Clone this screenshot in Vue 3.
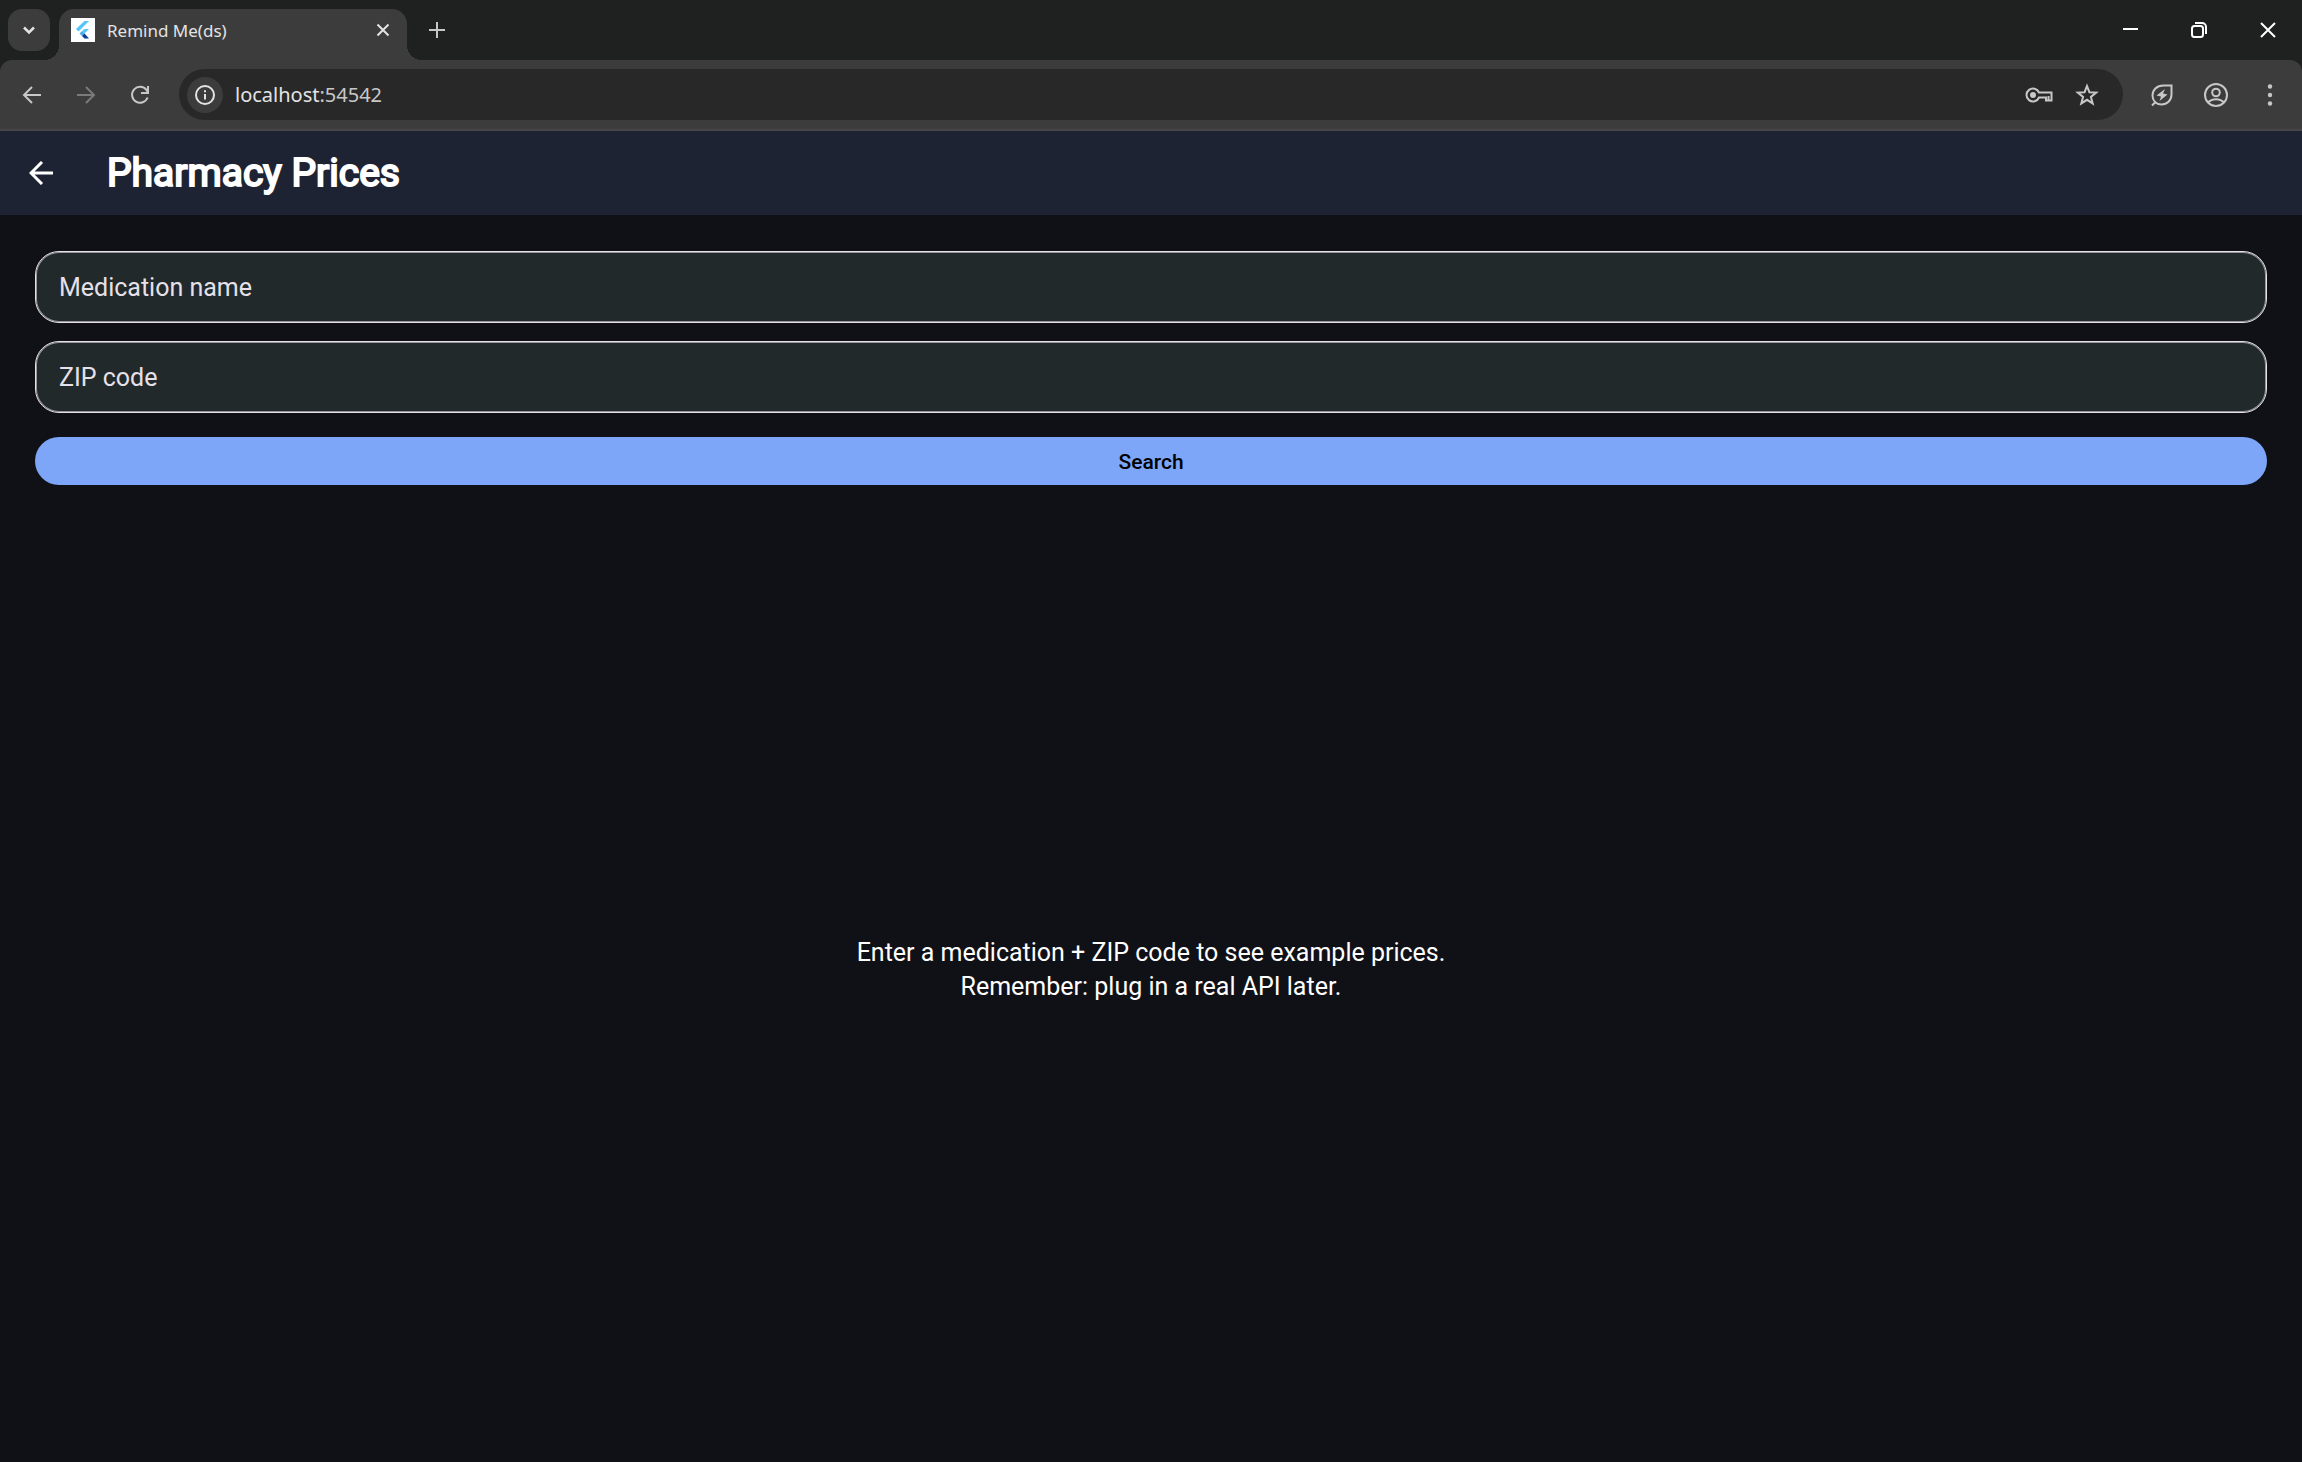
<template>
  <div class="window">
    <header class="tab-strip">
      <button class="tab-search" type="button" aria-label="Search tabs">
        <svg width="14" height="14" viewBox="0 0 14 14"><path d="M2 4.5l5 5 5-5" /></svg>
      </button>
      <div class="tab">
        <svg class="favicon" width="24" height="24" viewBox="0 0 24 24">
          <rect width="24" height="24" fill="#fff" />
          <path d="M13.5 3H18L7.5 13.5 5 11z" fill="#54c5f8" />
          <path d="M13.5 11H18l-4.5 4.5-2.5-2.5z" fill="#54c5f8" />
          <path d="M8.5 15.5L11 13l2.5 2.5L11 18z" fill="#47a9ee" />
          <path d="M11 18l2.5-2.5L18 20.5h-4.5z" fill="#0a3a94" />
        </svg>
        <span class="tab-title">Remind Me(ds)</span>
        <button class="tab-close" type="button" aria-label="Close tab">
          <svg width="14" height="14" viewBox="0 0 14 14"><path d="M1.5 1.5l11 11M12.5 1.5l-11 11" /></svg>
        </button>
      </div>
      <button class="new-tab" type="button" aria-label="New tab">
        <svg width="16" height="16" viewBox="0 0 16 16"><path d="M8 0v16M0 8h16" /></svg>
      </button>
      <div class="window-controls">
        <button type="button" aria-label="Minimize">
          <svg width="16" height="16" viewBox="0 0 16 16"><path d="M1 7h15" /></svg>
        </button>
        <button type="button" aria-label="Restore">
          <svg width="16" height="16" viewBox="0 0 16 16">
            <rect x="1" y="4" width="11" height="11" rx="2.5" />
            <path d="M4 1h7a4 4 0 0 1 4 4v7" />
          </svg>
        </button>
        <button type="button" aria-label="Close">
          <svg width="16" height="16" viewBox="0 0 16 16"><path d="M1 1l14 14M15 1L1 15" /></svg>
        </button>
      </div>
    </header>

    <nav class="toolbar">
      <button class="tool" type="button" aria-label="Back">
        <svg width="20" height="20" viewBox="0 0 20 20"><path d="M19 10H2M10 2l-8 8 8 8" /></svg>
      </button>
      <button class="tool" type="button" aria-label="Forward" disabled>
        <svg width="20" height="20" viewBox="0 0 20 20"><path d="M1 10h17M10 2l8 8-8 8" /></svg>
      </button>
      <button class="tool" type="button" aria-label="Reload">
        <svg width="20" height="20" viewBox="0 0 20 20">
          <path d="M17.6 12.5A8 8 0 1 1 16.5 5L18 7.5M18 1v7h-7" />
        </svg>
      </button>
      <div class="omnibox">
        <button class="site-info" type="button" aria-label="View site information">
          <svg width="22" height="22" viewBox="0 0 22 22">
            <circle cx="11" cy="11" r="9" />
            <path d="M11 10v5.5M11 6.2v2" />
          </svg>
        </button>
        <span class="url">localhost<span class="port">:54542</span></span>
        <button type="button" aria-label="Manage passwords">
          <svg width="28" height="18" viewBox="0 0 28 18">
            <path d="M14 6.5h12.5v8H21v-3h-7a6.500 6.500 0 1 1 0-5zM23.500 10v4" />
            <circle class="solid" cx="8" cy="9" r="3" />
          </svg>
        </button>
        <button type="button" aria-label="Bookmark this tab">
          <svg width="24" height="24" viewBox="0 0 24 24">
            <path d="M12 3l2.4 6.2 6.8.4-5.3 4.3 1.8 6.5L12 16.8l-5.7 3.6 1.8-6.5-5.3-4.3 6.8-.4z" />
          </svg>
        </button>
      </div>
      <button class="tool" type="button" aria-label="Energy saver">
        <svg width="24" height="24" viewBox="0 0 24 24">
          <path d="M21.5 2.5h-8C6.5 2.5 2.5 7 2.5 12.5c0 5 3.5 9 9 9s10-4 10-10zM6 18.5l-4 4" />
          <path class="solid" d="M15 6l-8.5 6.500 4.500 1L9.500 18l8-6.500-4.500-1z" />
        </svg>
      </button>
      <button class="tool" type="button" aria-label="Profile">
        <svg width="26" height="26" viewBox="0 0 26 26">
          <circle cx="13" cy="13" r="11" />
          <circle cx="13" cy="10.5" r="3.8" />
          <path d="M5 20.5c4-4.500 12-4.500 16 0" />
        </svg>
      </button>
      <button class="tool" type="button" aria-label="Browser menu">
        <svg width="24" height="24" viewBox="0 0 24 24">
          <circle class="solid" cx="12" cy="3.5" r="2.2" />
          <circle class="solid" cx="12" cy="12" r="2.2" />
          <circle class="solid" cx="12" cy="20.5" r="2.2" />
        </svg>
      </button>
    </nav>

    <div class="app-bar">
      <button type="button" aria-label="Back">
        <svg width="24" height="24" viewBox="0 0 24 24"><path d="M24 12H2M13 1L2 12l11 11" /></svg>
      </button>
      <h1>Pharmacy Prices</h1>
    </div>

    <main class="page">
      <form @submit.prevent="search">
        <input v-model="medication" type="text" aria-label="Medication name" placeholder="Medication name" />
        <input v-model="zip" type="text" inputmode="numeric" aria-label="ZIP code" placeholder="ZIP code" />
        <button type="submit">Search</button>
      </form>
      <p class="empty-state">
        Enter a medication + ZIP code to see example prices.<br />
        Remember: plug in a real API later.
      </p>
    </main>
  </div>
</template>

<script setup>
import { ref } from 'vue'

const medication = ref('')
const zip = ref('')

const search = () => {
  medication.value = medication.value.trim()
  zip.value = zip.value.trim()
}
</script>

<style>
body {
  margin: 0;
  background: #101116;
}
</style>

<style scoped>
.window {
  display: flex;
  flex-direction: column;
  min-height: 100vh;
  background: #101116;
  color: #fff;
  font-family: Roboto, "Liberation Sans", sans-serif;
}

button {
  display: flex;
  align-items: center;
  justify-content: center;
  flex-shrink: 0;
  margin: 0;
  padding: 0;
  border: 0;
  background: none;
  color: inherit;
  font: inherit;
  cursor: pointer;
}

svg {
  fill: none;
  stroke: currentColor;
  stroke-width: 2;
}

svg .solid {
  fill: currentColor;
  stroke: none;
}

.tab-strip {
  position: relative;
  z-index: 1; /* keeps the tab above the toolbar's shadow */
  display: flex;
  align-items: center;
  box-sizing: border-box;
  height: 60px;
  padding-left: 8px;
  background: #1f2120;
  font-family: "Noto Sans", "Open Sans", sans-serif;
}

.tab-search {
  width: 42px;
  height: 42px;
  border-radius: 14px;
  background: #3c3c3c;
  color: #e3e3e3;
}

.tab-search svg {
  stroke-width: 2.5;
}

.tab {
  position: relative;
  display: flex;
  align-items: center;
  align-self: flex-end;
  box-sizing: border-box;
  width: 348px;
  height: 51px;
  margin-left: 9px;
  padding: 0 17px 9px 12px;
  border-radius: 15px 15px 0 0;
  background: #3c3c3c;
}

/* flared feet of the active tab */
.tab::before,
.tab::after {
  content: "";
  position: absolute;
  bottom: 0;
  width: 15px;
  height: 15px;
}

.tab::before {
  right: 100%;
  background: radial-gradient(circle at 0 0, transparent 15px, #3c3c3c 15px);
}

.tab::after {
  left: 100%;
  background: radial-gradient(circle at 100% 0, transparent 15px, #3c3c3c 15px);
}

.favicon {
  stroke: none;
}

.tab-title {
  flex: 1;
  margin-left: 12px;
  padding-top: 2px;
  color: #e3e3e3;
  font-size: 17px;
  line-height: 24px;
}

.tab-close {
  color: #e3e3e3;
}

.new-tab {
  margin-left: 22px;
  color: #c7c7c7;
}

.window-controls {
  display: flex;
  margin-left: auto;
}

.window-controls button {
  width: 69px;
  height: 60px;
}

.toolbar {
  display: flex;
  align-items: center;
  box-sizing: border-box;
  height: 71px;
  padding: 0 5px;
  border-bottom: 2px solid #464646;
  border-radius: 12px 12px 0 0;
  background: #3c3c3c;
  box-shadow: 0 -12px 0 #1f2120;
  color: #c7c7c7;
  font-family: "Noto Sans", "Open Sans", sans-serif;
}

.tool {
  width: 54px;
  height: 51px;
}

.tool:disabled {
  color: #7a7a7a;
}

.omnibox {
  display: flex;
  flex: 1;
  align-items: center;
  box-sizing: border-box;
  height: 51px;
  margin: 0 12px;
  padding: 0 12px 0 8px;
  border-radius: 26px;
  background: #282828;
}

.omnibox button {
  width: 48px;
  height: 48px;
}

.omnibox .site-info {
  width: 36px;
  height: 36px;
  border-radius: 50%;
  background: #3c3c3c;
  color: #e3e3e3;
}

.url {
  flex: 1;
  margin-left: 12px;
  color: #e3e3e3;
  font-size: 20px;
}

.port {
  color: #c7c7c7;
}

.app-bar {
  display: flex;
  align-items: center;
  height: 84px;
  background: #1e2333;
}

.app-bar button {
  width: 82px;
  height: 84px;
}

.app-bar svg {
  stroke-width: 3;
}

.app-bar h1 {
  margin: 0 0 0 25px;
  font-size: 39px;
  font-weight: 400;
  line-height: 48px;
  -webkit-text-stroke: 2px currentColor;
}

.page {
  display: flex;
  flex: 1;
  flex-direction: column;
  padding: 36px 35px;
}

form {
  display: flex;
  flex-direction: column;
}

form input {
  box-sizing: border-box;
  width: 100%;
  height: 72px;
  margin: 0 0 18px;
  padding: 0 23px;
  border: 1px solid #e6e0e9;
  border-radius: 24px;
  outline: none;
  background: #21292b;
  box-shadow: inset 0 0 0 1px rgba(230, 224, 233, 0.6);
  color: #e6e0e9;
  font: inherit;
  font-size: 25px;
}

form input::placeholder {
  color: #e6e0e9;
  opacity: 1;
}

form button {
  height: 48px;
  margin-top: 6px;
  padding-top: 2px;
  border-radius: 24px;
  background: #7da6f9;
  color: #000;
  font-size: 21px;
  font-weight: 500;
}

.empty-state {
  margin: auto;
  padding-top: 28px;
  font-size: 25px;
  line-height: 34px;
  text-align: center;
}
</style>
